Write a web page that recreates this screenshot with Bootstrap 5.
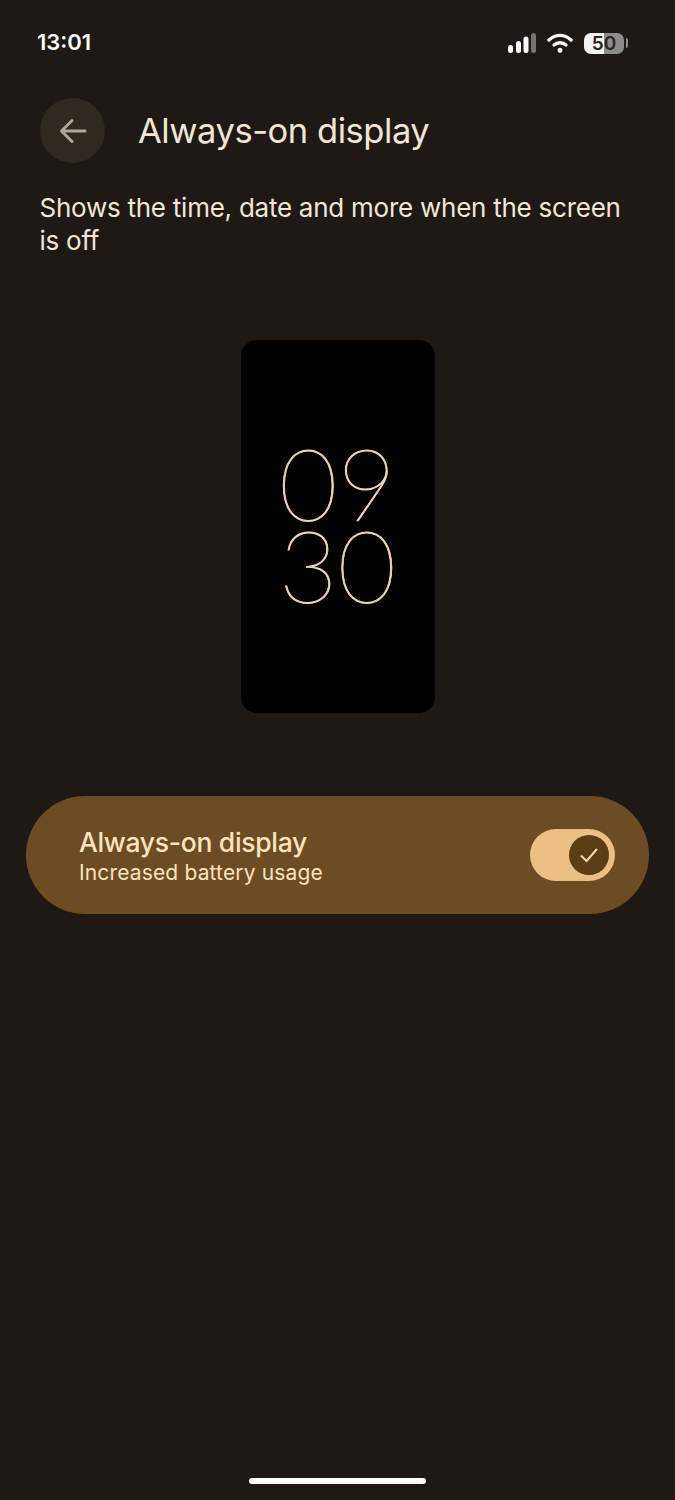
<!DOCTYPE html>
<html lang="en">
<head>
  <meta charset="UTF-8" />
  <meta name="viewport" content="width=device-width, initial-scale=1.0"/>
  <title>Always-on display</title>
  <link href="https://cdn.jsdelivr.net/npm/bootstrap@5.3.0/dist/css/bootstrap.min.css" rel="stylesheet">
  <style>
    body {
      background: #1e1915;
      font-family: Inter, "Open Sans", sans-serif;
      color: #f1e6d6;
    }
    .screen { height: 1500px; width: 675px; overflow: hidden; }
    .status-row { height: 98px; padding: 28px 47px 0 37px; align-items: flex-start; }
    .clock-now { font-size: 22px; font-weight: 600; line-height: 28px; color: #fff; }
    .status-icons { gap: 11px; height: 30px; }
    .batt { width: 40px; height: 21px; border-radius: 7px; background: linear-gradient(90deg, #f2f2f0 0 50%, #8d8c89 50%); color: #2a2722; font-size: 19px; font-weight: 600; line-height: 21px; text-align: center; }
    .batt-tip { width: 2px; height: 10px; margin-left: 2px; background: #8d8c89; border-radius: 0 2px 2px 0; }
    .back-btn { width: 65px; height: 65px; border-radius: 50%; background: #2f2920; }
    .head-row { padding-left: 40px; gap: 33px; height: 65px; }
    .head-title { font-size: 34.5px; font-weight: 400; margin: 0; letter-spacing: -.45px; }
    .intro { margin: 28px 40px 0 39.5px; font-size: 26px; line-height: 33px; letter-spacing: -.25px; }
    .phone { width: 194px; height: 373px; margin: 83px auto 0; background: #000; border-radius: 16px; padding-bottom: 7px; }
    .phone-time { font-family: Lato, sans-serif; font-weight: 100; font-size: 101px; line-height: 82px; color: #f3d7a8; -webkit-text-stroke: .9px #f3d7a8; }
    .aod-pill { margin: 83px 26px 0; height: 118px; border-radius: 59px; background: #6c4c22; padding: 0 34px 0 53px; }
    .aod-title { font-size: 26.5px; font-weight: 500; line-height: 32px; color: #fbe3bd; letter-spacing: -.3px; }
    .aod-sub { font-size: 21px; line-height: 30px; color: #fbe3bd; letter-spacing: .15px; }
    .aod-toggle { width: 85px; height: 52px; border-radius: 26px; background: #ecbf85; padding-right: 6px; }
    .aod-knob { width: 40px; height: 40px; border-radius: 50%; background: #5b3e14; }
    .home-bar { width: 177px; height: 6px; border-radius: 3px; background: #fff; margin: 0 auto; }
    .home-wrap { position: absolute; left: 0; right: 0; top: 1478px; }
  </style>
</head>
<body>
  <div class="screen position-relative">
    <div class="d-flex justify-content-between status-row">
      <div class="clock-now">13:01</div>
      <div class="d-flex align-items-center status-icons">
        <svg width="28" height="20" viewBox="0 0 28 20">
          <rect x="0" y="12" width="5" height="8" rx="2.5" fill="#fff"/>
          <rect x="8" y="8" width="5" height="12" rx="2.5" fill="#fff"/>
          <rect x="15.500" y="3.500" width="5" height="16.500" rx="2.500" fill="#fff"/>
          <rect x="23" y="0" width="5" height="20" rx="2.500" fill="#77756f"/>
        </svg>
        <svg width="26" height="20" viewBox="0 0 26 20" fill="none" stroke="#fff" stroke-width="3.400" stroke-linecap="round">
          <path d="M2 7C8.500 .8 17.500 .8 24 7"/>
          <path d="M7 12C10.500 9 15.500 9 19 12"/>
          <circle cx="13" cy="17.300" r="1.500" fill="#fff" stroke-width="2"/>
        </svg>
        <div class="d-flex align-items-center">
          <div class="batt">50</div>
          <div class="batt-tip"></div>
        </div>
      </div>
    </div>

    <div class="d-flex align-items-center head-row">
      <div class="back-btn d-flex align-items-center justify-content-center">
        <svg width="28" height="26" viewBox="0 0 28 26" fill="none" stroke="#b0a698" stroke-width="3" stroke-linecap="round" stroke-linejoin="round">
          <path d="M26 13H3M13 2.500L2.500 13 13 23.500"/>
        </svg>
      </div>
      <h1 class="head-title">Always-on display</h1>
    </div>

    <p class="intro">Shows the time, date and more when the screen is off</p>

    <div class="phone d-flex align-items-center justify-content-center">
      <div class="phone-time text-center">09<br>30</div>
    </div>

    <div class="aod-pill d-flex align-items-center justify-content-between">
      <div class="pt-1">
        <div class="aod-title">Always-on display</div>
        <div class="aod-sub">Increased battery usage</div>
      </div>
      <div class="aod-toggle d-flex align-items-center justify-content-end">
        <div class="aod-knob d-flex align-items-center justify-content-center">
          <svg width="20" height="16" viewBox="0 0 20 16" fill="none" stroke="#f5d9ae" stroke-width="2">
            <path d="M2 8.500L7.500 14 18 2"/>
          </svg>
        </div>
      </div>
    </div>

    <div class="home-wrap"><div class="home-bar"></div></div>
  </div>
  <script src="https://cdn.jsdelivr.net/npm/bootstrap@5.3.0/dist/js/bootstrap.bundle.min.js"></script>
</body>
</html>
